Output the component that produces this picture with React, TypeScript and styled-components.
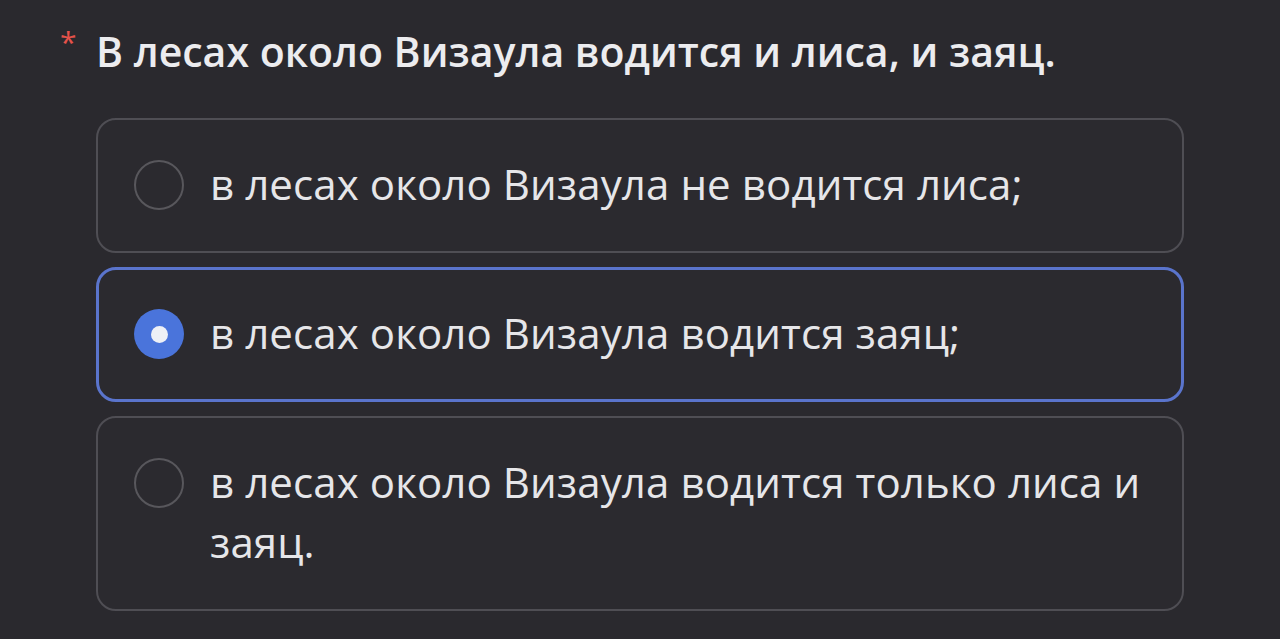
import React from "react";
import styled, { createGlobalStyle } from "styled-components";

const Global = createGlobalStyle`
  html, body { margin: 0; padding: 0; background: #2a292e; }
  body { font-family: "Open Sans", "Noto Sans", sans-serif; }
`;

const Page = styled.div`
  width: 1280px;
  height: 639px;
  background: #2a292e;
  box-sizing: border-box;
  padding: 23px 96px 0 60px;
  overflow: hidden;
`;

const Title = styled.div`
  display: flex;
  align-items: flex-start;
  gap: 16px;
  color: #ececef;
  font-size: 41px;
  font-weight: 600;
  line-height: 56px;
  letter-spacing: 0;
`;

const Star = styled.span`
  color: #e5524a;
  font-size: 30px;
  font-weight: 400;
  line-height: 30px;
  width: 20px;
  margin-top: 4px;
`;

const List = styled.div`
  margin-top: 39px;
  margin-left: 36px;
  display: flex;
  flex-direction: column;
  gap: 14px;
`;

const Card = styled.label<{ $active?: boolean }>`
  display: flex;
  align-items: flex-start;
  gap: 26px;
  box-sizing: border-box;
  width: 1088px;
  padding: ${(p) => (p.$active ? "33px 35px 36px" : "34px 36px 37px")};
  border: ${(p) => (p.$active ? "3px solid #5a74cc" : "2px solid #4f4e54")};
  border-radius: 20px;
  background: #2b2a2f;
`;

const Radio = styled.span<{ $checked?: boolean }>`
  flex: none;
  width: 50px;
  height: 50px;
  margin-top: 6px;
  border-radius: 50%;
  box-sizing: border-box;
  border: ${(p) => (p.$checked ? "none" : "2px solid #58575c")};
  background: ${(p) => (p.$checked ? "#4a74db" : "transparent")};
  display: flex;
  align-items: center;
  justify-content: center;
  &::after {
    content: "";
    display: ${(p) => (p.$checked ? "block" : "none")};
    width: 17px;
    height: 17px;
    border-radius: 50%;
    background: #eef0f6;
  }
`;

const OptionText = styled.span`
  color: #e6e6e9;
  font-size: 42px;
  line-height: 60px;
  letter-spacing: 0.1px;
`;

const options = [
  "в лесах около Визаула не водится лиса;",
  "в лесах около Визаула водится заяц;",
  "в лесах около Визаула водится только лиса и заяц.",
];

export default function App() {
  return (
    <Page>
      <Global />
      <Title>
        <Star>*</Star>
        <span>В лесах около Визаула водится и лиса, и заяц.</span>
      </Title>
      <List>
        {options.map((o, i) => (
          <Card key={i} $active={i === 1}>
            <Radio $checked={i === 1} />
            <OptionText>{o}</OptionText>
          </Card>
        ))}
      </List>
    </Page>
  );
}
